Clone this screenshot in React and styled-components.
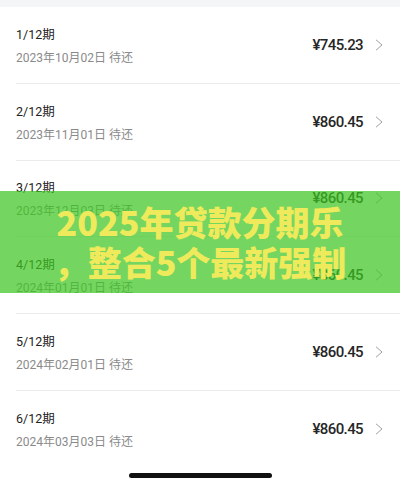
import React from "react";
import styled, { createGlobalStyle } from "styled-components";

const GlobalStyle = createGlobalStyle`
  html, body { margin: 0; padding: 0; background: #fff; }
  body { font-family: Roboto, "Noto Sans CJK SC", sans-serif; }
`;

const Page = styled.div`
  position: relative;
  width: 400px;
  height: 487px;
  overflow: hidden;
  display: flex;
  flex-direction: column;
  background: #fff;
`;

const TopStrip = styled.div`
  height: 7px;
  flex: none;
  background: #f4f5f7;
`;

const List = styled.div`
  display: flex;
  flex-direction: column;
  padding-left: 16px;
`;

const Row = styled.div`
  display: flex;
  align-items: center;
  height: 75.8px;
  padding-right: 17px;
  border-bottom: ${(p) => (p.$last ? "none" : "1px solid #ebebeb")};
  flex: none;
`;

const Left = styled.div`
  flex: 1;
  display: flex;
  flex-direction: column;
  gap: 5px;
  padding-top: 3px;
`;

const Title = styled.div`
  font-family: Roboto, "Noto Sans CJK SC", sans-serif;
  font-size: 12.5px;
  line-height: 18px;
  color: #222;
`;

const DateText = styled.div`
  font-family: Roboto, "Noto Sans CJK SC", sans-serif;
  font-size: 12px;
  line-height: 18px;
  color: #8a8a8a;
`;

const Price = styled.div`
  font-family: Roboto, "Noto Sans CJK SC", sans-serif;
  font-size: 15px;
  font-weight: 500;
  letter-spacing: -0.6px;
  color: #262626;
  margin-right: 12px;
`;

const Chevron = styled.svg`
  width: 8px;
  height: 12px;
  flex: none;
`;

const HomeArea = styled.div`
  flex: 1;
  display: flex;
  justify-content: center;
  padding-top: 6px;
`;

const HomeBar = styled.div`
  width: 143px;
  height: 5px;
  border-radius: 3px;
  background: #111;
`;

const Banner = styled.div`
  position: absolute;
  left: 0;
  right: 0;
  top: 191px;
  height: 102px;
  box-sizing: border-box;
  padding-top: 11px;
  background: rgba(62, 198, 34, 0.72);
  text-align: center;
  font-family: "Noto Sans CJK SC", sans-serif;
  font-weight: 900;
  font-size: 34px;
  line-height: 40px;
  color: #efea5c;
`;

const items = [
  { t: "1/12期", d: "2023年10月02日 待还", p: "¥745.23" },
  { t: "2/12期", d: "2023年11月01日 待还", p: "¥860.45" },
  { t: "3/12期", d: "2023年12月03日 待还", p: "¥860.45" },
  { t: "4/12期", d: "2024年01月01日 待还", p: "¥860.45" },
  { t: "5/12期", d: "2024年02月01日 待还", p: "¥860.45" },
  { t: "6/12期", d: "2024年03月03日 待还", p: "¥860.45" },
];

export default function App() {
  return (
    <>
      <GlobalStyle />
      <Page>
        <TopStrip />
        <List>
          {items.map((it, i) => (
            <Row key={i} $last={i === items.length - 1}>
              <Left>
                <Title>{it.t}</Title>
                <DateText>{it.d}</DateText>
              </Left>
              <Price>{it.p}</Price>
              <Chevron viewBox="0 0 8 12">
                <polyline points="1,0.8 7,6 1,11.2" fill="none" stroke="#a0a0a0" strokeWidth="1" />
              </Chevron>
            </Row>
          ))}
        </List>
        <HomeArea>
          <HomeBar />
        </HomeArea>
        <Banner>
          <div>2025年贷款分期乐</div>
          <div>，整合5个最新强制</div>
        </Banner>
      </Page>
    </>
  );
}
